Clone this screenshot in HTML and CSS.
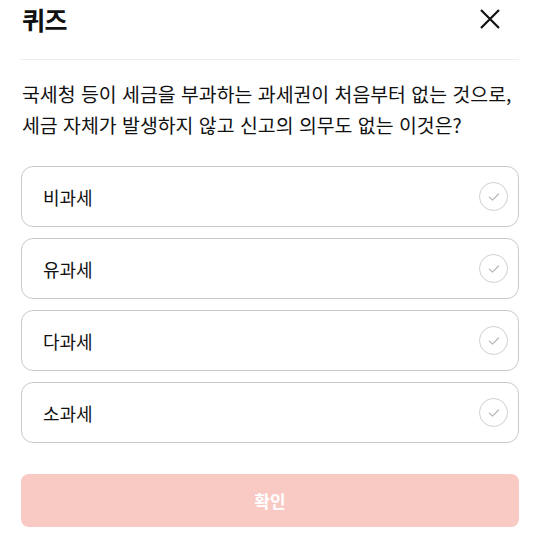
FILE: index.html
```html
<!DOCTYPE html>
<html lang="ko">
<head>
<meta charset="utf-8">
<link rel="stylesheet" href="styles.css">
</head>
<body>
<div class="page">
  <header class="header">
    <h1 class="title">퀴즈</h1>
    <button class="close" aria-label="닫기">
      <svg width="22" height="22" viewBox="0 0 22 22"><path d="M2 2 L20 20 M20 2 L2 20" stroke="#111" stroke-width="2.2" fill="none"/></svg>
    </button>
  </header>
  <p class="question">국세청 등이 세금을 부과하는 과세권이 처음부터 없는 것으로,<br>세금 자체가 발생하지 않고 신고의 의무도 없는 이것은?</p>
  <ul class="options">
    <li class="option"><span>비과세</span><span class="check"><svg width="12" height="10" viewBox="0 0 12 10"><path d="M1.5 5.2 L4.5 8 L10.5 2" stroke="#bdbdbd" stroke-width="1.4" fill="none" stroke-linecap="round" stroke-linejoin="round"/></svg></span></li>
    <li class="option"><span>유과세</span><span class="check"><svg width="12" height="10" viewBox="0 0 12 10"><path d="M1.5 5.2 L4.5 8 L10.5 2" stroke="#bdbdbd" stroke-width="1.4" fill="none" stroke-linecap="round" stroke-linejoin="round"/></svg></span></li>
    <li class="option"><span>다과세</span><span class="check"><svg width="12" height="10" viewBox="0 0 12 10"><path d="M1.5 5.2 L4.5 8 L10.5 2" stroke="#bdbdbd" stroke-width="1.4" fill="none" stroke-linecap="round" stroke-linejoin="round"/></svg></span></li>
    <li class="option"><span>소과세</span><span class="check"><svg width="12" height="10" viewBox="0 0 12 10"><path d="M1.5 5.2 L4.5 8 L10.5 2" stroke="#bdbdbd" stroke-width="1.4" fill="none" stroke-linecap="round" stroke-linejoin="round"/></svg></span></li>
  </ul>
  <button class="confirm">확인</button>
</div>
</body>
</html>
```
FILE: styles.css
```css
* { box-sizing: border-box; }
html, body { margin: 0; padding: 0; background: #fff; }
body {
  font-family: "Noto Sans CJK KR", "Noto Sans", sans-serif;
  color: #111;
}
.page {
  width: 540px;
  padding: 0 21px 0 21px;
}
.header {
  display: flex;
  justify-content: space-between;
  align-items: center;
  height: 60px;
  padding-bottom: 21px;
  border-bottom: 1px solid #eeeeee;
}
.title {
  margin: 0 0 0 1px;
  font-size: 25px;
  font-weight: 700;
  line-height: 38px;
  letter-spacing: -0.5px;
}
.close {
  border: 0;
  background: none;
  padding: 0;
  margin-right: 18px;
  width: 22px;
  height: 22px;
  display: flex;
}
.question {
  margin: 18px 0 0 1px;
  font-size: 19.4px;
  line-height: 31px;
  letter-spacing: 0;
}
.options {
  list-style: none;
  margin: 26px 0 0 0;
  padding: 0;
  display: flex;
  flex-direction: column;
  gap: 11px;
}
.option {
  height: 61px;
  border: 1px solid #c9c9c9;
  border-radius: 12px;
  display: flex;
  align-items: center;
  justify-content: space-between;
  padding: 0 10px 0 21px;
  font-size: 18px;
}
.check {
  width: 29px;
  height: 29px;
  border: 1.5px solid #cfcfcf;
  border-radius: 50%;
  display: flex;
  align-items: center;
  justify-content: center;
}
.confirm {
  display: block;
  width: 100%;
  margin-top: 31px;
  height: 53px;
  border: 0;
  border-radius: 8px;
  background: #f9c9c4;
  color: #fff;
  font-family: "Noto Sans CJK KR", sans-serif;
  font-size: 17px;
  font-weight: 700;
}
```
